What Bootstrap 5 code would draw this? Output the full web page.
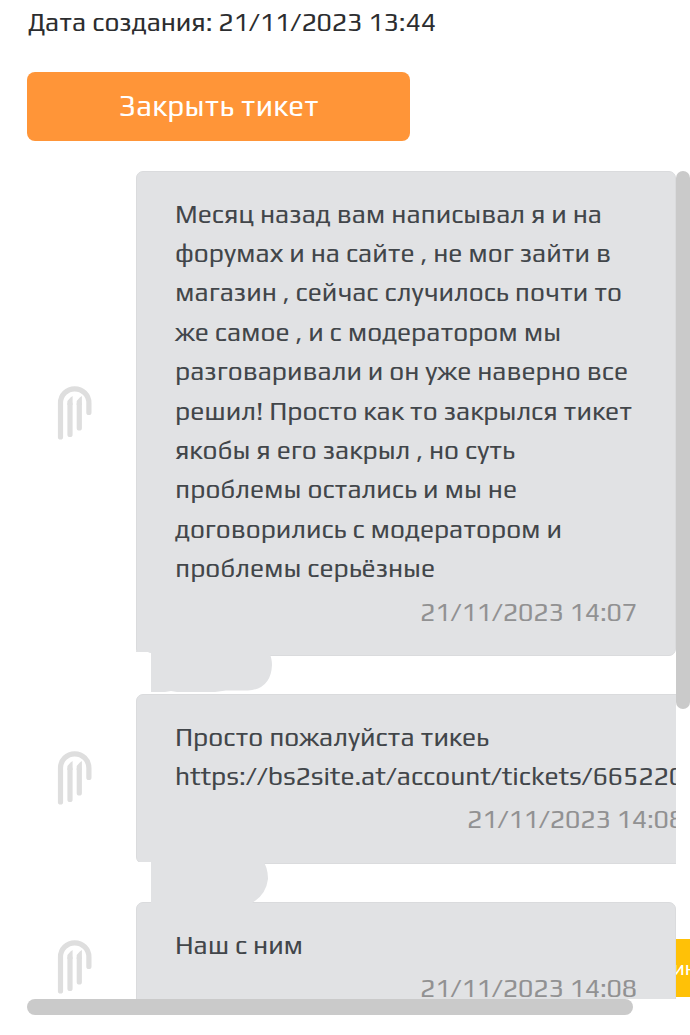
<!DOCTYPE html>
<html lang="ru">
<head>
<meta charset="utf-8">
<meta name="viewport" content="width=device-width, initial-scale=1">
<title>Тикет</title>
<link href="https://cdn.jsdelivr.net/npm/bootstrap@5.3.0/dist/css/bootstrap.min.css" rel="stylesheet">
<style>
body{font-family:Play,"Noto Sans","Open Sans",sans-serif;font-size:26.4px;height:1035px;color:#2c2d2f}
.created{height:72px;line-height:32px;padding:6px 0 0 28px}
.btn-close-ticket{width:383px;height:69px;margin-left:27.400px;background:#ff9538;color:#fff;font-size:29.500px;line-height:1;border:0;border-radius:8px;padding:0 0 1px}
.ticket-area{height:844px;margin-top:30px;grid-template:828px 16px / 649px 14px;padding-left:27px}
.feed-pane{overflow:hidden}
.msg-icon{width:109px}
.msg-icon svg{width:36px;height:56px;margin:-2px 0 0 29px}
.msg-icon.icon-low{padding-top:39px}
.bubble{width:540px;background:#e1e2e4;border:1px solid #dadbdd;border-radius:7px;padding:21.5px 38px 0;line-height:39.4px;color:#42464a}
.b-first{height:485px}.b-second{height:170px}.b-third{height:170px}
.b-second{width:587px}
.stamp{color:#919192;line-height:47px}
.tail-gap{height:38px}
.tail{position:absolute;left:108px;top:-5px;width:140px;height:44px}
.thumb-y{width:14px;height:538px;background:#cacaca;border-radius:7px}
.thumb-x{width:606px;height:16px;background:#cacaca;border-radius:8px}
.side-tab{top:939px;width:14px;height:58px;background:#ffc107;color:#fff;font-size:20px;line-height:58px}
.side-tab span{margin-left:-3px}
</style>
</head>
<body class="bg-white m-0 overflow-hidden position-relative">
<svg class="d-none"><symbol id="logo" viewBox="0 0 36 56"><g fill="none" stroke="#dedede" stroke-width="5.2" stroke-linecap="round"><path d="M4.500 52V18A14.200 14.200 0 0 1 32.900 18V27.500"/><path d="M14 49.500V19M23.300 43V19"/></g><path fill="#dedede" d="M11.400 19V16L14.500 12.500 16.600 11V20H11.400ZM20.700 19V16L23.800 12.500 25.900 11V20H20.700Z"/></symbol></svg>
<div class="created text-nowrap"><span data-w="408">Дата создания: 21/11/2023 13:44</span></div>
<button class="btn btn-close-ticket d-block" type="button"><span data-w="200">Закрыть тикет</span></button>
<div class="ticket-area d-grid">
  <div class="feed-pane d-flex flex-column">
    <div class="d-flex align-items-center flex-shrink-0">
      <div class="msg-icon flex-shrink-0"><svg><use href="#logo"/></svg></div>
      <div class="bubble b-first flex-shrink-0 text-nowrap">
        <span data-w="427">Месяц назад вам написывал я и на</span><br>
        <span data-w="436">форумах и на сайте , не мог зайти в</span><br>
        <span data-w="447">магазин , сейчас случилось почти то</span><br>
        <span data-w="386">же самое , и с модератором мы</span><br>
        <span data-w="453">разговаривали и он уже наверно все</span><br>
        <span data-w="457">решил! Просто как то закрылся тикет</span><br>
        <span data-w="340">якобы я его закрыл , но суть</span><br>
        <span data-w="342">проблемы остались и мы не</span><br>
        <span data-w="387">договорились с модератором и</span><br>
        <span data-w="260">проблемы серьёзные</span>
        <div class="stamp text-end"><span data-w="217">21/11/2023 14:07</span></div>
      </div>
    </div>
    <div class="tail-gap position-relative flex-shrink-0">
      <svg class="tail" viewBox="0 0 140 44"><path fill="#fff" d="M0 1H17V42H0Z"/><path fill="#e1e2e4" d="M1 0H16V2Q14 2 13 1H1ZM16 0H134Q137 8 137 14Q136 38 113 39.500H91L80 41H42L36 40 30 41H16Z"/></svg>
    </div>
    <div class="d-flex align-items-center flex-shrink-0">
      <div class="msg-icon flex-shrink-0"><svg><use href="#logo"/></svg></div>
      <div class="bubble b-second flex-shrink-0 text-nowrap">
        <span data-w="314">Просто пожалуйста тикеь</span><br>
        <span data-w="509">https://bs2site.at/account/tickets/665220</span>
        <div class="stamp text-end"><span data-w="217">21/11/2023 14:08</span></div>
      </div>
    </div>
    <div class="tail-gap position-relative flex-shrink-0">
      <svg class="tail" viewBox="0 0 140 44"><path fill="#fff" d="M0 3H17V43H0Z"/><path fill="#e1e2e4" d="M16 0H127Q133 8 133 20Q131 36 117 44H16Z"/></svg>
    </div>
    <div class="d-flex align-items-start flex-shrink-0">
      <div class="msg-icon icon-low flex-shrink-0"><svg><use href="#logo"/></svg></div>
      <div class="bubble b-third flex-shrink-0 text-nowrap">
        <span data-w="128">Наш с ним</span>
        <div class="stamp text-end"><span data-w="217">21/11/2023 14:08</span></div>
      </div>
    </div>
  </div>
  <div class="thumb-y"></div>
  <div class="thumb-x"></div>
</div>
<div class="side-tab position-absolute end-0 overflow-hidden text-nowrap"><span>ин</span></div>
<script src="https://cdn.jsdelivr.net/npm/bootstrap@5.3.0/dist/js/bootstrap.bundle.min.js"></script>
<script>
// Even out the tracking of fallback fonts so each line keeps its designed length.
document.querySelectorAll('[data-w]').forEach(function (el) {
  var spare = Number(el.dataset.w) - el.getBoundingClientRect().width;
  el.style.letterSpacing = spare / el.textContent.length + 'px';
});
</script>
</body>
</html>
